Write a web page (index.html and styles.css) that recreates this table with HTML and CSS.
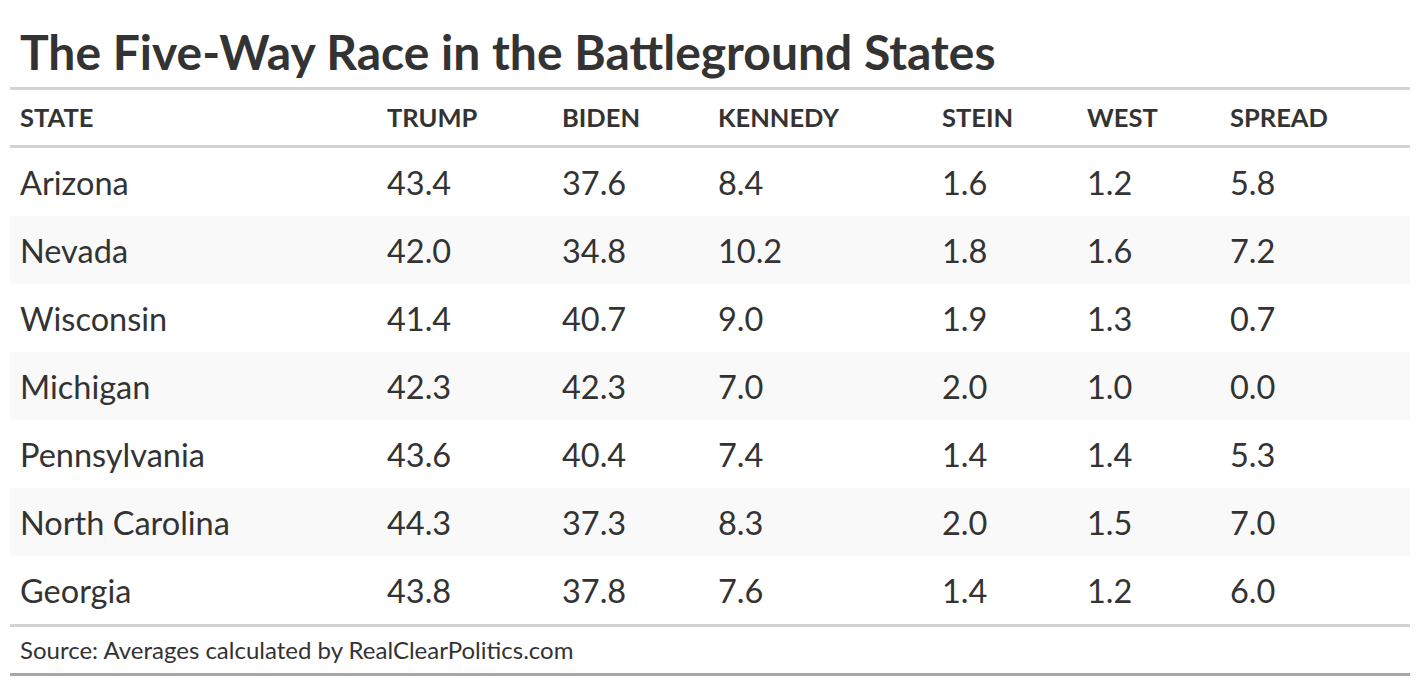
FILE: index.html
```html
<!DOCTYPE html>
<html>
<head>
<meta charset="utf-8">
<link rel="stylesheet" href="styles.css">
</head>
<body>
<div class="chart">
  <h1 class="title">The Five-Way Race in the Battleground States</h1>
  <table class="data">
    <colgroup>
      <col class="c-state"><col class="c-trump"><col class="c-biden"><col class="c-kennedy"><col class="c-stein"><col class="c-west"><col class="c-spread">
    </colgroup>
    <thead>
      <tr><th>STATE</th><th>TRUMP</th><th>BIDEN</th><th>KENNEDY</th><th>STEIN</th><th>WEST</th><th>SPREAD</th></tr>
    </thead>
    <tbody>
      <tr><td>Arizona</td><td>43.4</td><td>37.6</td><td>8.4</td><td>1.6</td><td>1.2</td><td>5.8</td></tr>
      <tr><td>Nevada</td><td>42.0</td><td>34.8</td><td>10.2</td><td>1.8</td><td>1.6</td><td>7.2</td></tr>
      <tr><td>Wisconsin</td><td>41.4</td><td>40.7</td><td>9.0</td><td>1.9</td><td>1.3</td><td>0.7</td></tr>
      <tr><td>Michigan</td><td>42.3</td><td>42.3</td><td>7.0</td><td>2.0</td><td>1.0</td><td>0.0</td></tr>
      <tr><td>Pennsylvania</td><td>43.6</td><td>40.4</td><td>7.4</td><td>1.4</td><td>1.4</td><td>5.3</td></tr>
      <tr><td>North Carolina</td><td>44.3</td><td>37.3</td><td>8.3</td><td>2.0</td><td>1.5</td><td>7.0</td></tr>
      <tr><td>Georgia</td><td>43.8</td><td>37.8</td><td>7.6</td><td>1.4</td><td>1.2</td><td>6.0</td></tr>
    </tbody>
  </table>
  <p class="source">Source: Averages calculated by RealClearPolitics.com</p>
</div>
</body>
</html>
```
FILE: styles.css
```css
html, body {
  margin: 0;
  padding: 0;
  background: #ffffff;
}
body {
  font-family: Lato, "Liberation Sans", sans-serif;
  color: #333333;
}
.chart {
  margin: 0 10px;
  width: 1400px;
}
.title {
  margin: 0;
  padding: 26px 10px 0;
  box-sizing: border-box;
  height: 90px;
  font-size: 48px;
  line-height: 52px;
  font-weight: 700;
  color: #333333;
  white-space: nowrap;
  border-bottom: 3px solid #d3d3d3;
}
.data {
  width: 100%;
  border-collapse: collapse;
  table-layout: fixed;
}
.c-state { width: 367px; }
.c-trump { width: 175px; }
.c-biden { width: 156px; }
.c-kennedy { width: 224px; }
.c-stein { width: 145px; }
.c-west { width: 143px; }
.c-spread { width: 190px; }
.data th {
  text-align: left;
  font-weight: 700;
  font-size: 25.5px;
  height: 53px;
  padding: 0 10px 2px;
  border-bottom: 3px solid #d3d3d3;
}
.data td {
  height: 68px;
  padding: 0 10px;
  font-size: 32.5px;
}
.data tbody tr:nth-child(even) td {
  background: #f9f9f9;
}
.data tbody tr:last-child td {
  border-bottom: 3px solid #d3d3d3;
}
.source {
  margin: 0;
  padding: 0 10px;
  height: 46px;
  line-height: 46px;
  font-size: 24px;
  border-bottom: 3px solid #a6a6a6;
}
```
